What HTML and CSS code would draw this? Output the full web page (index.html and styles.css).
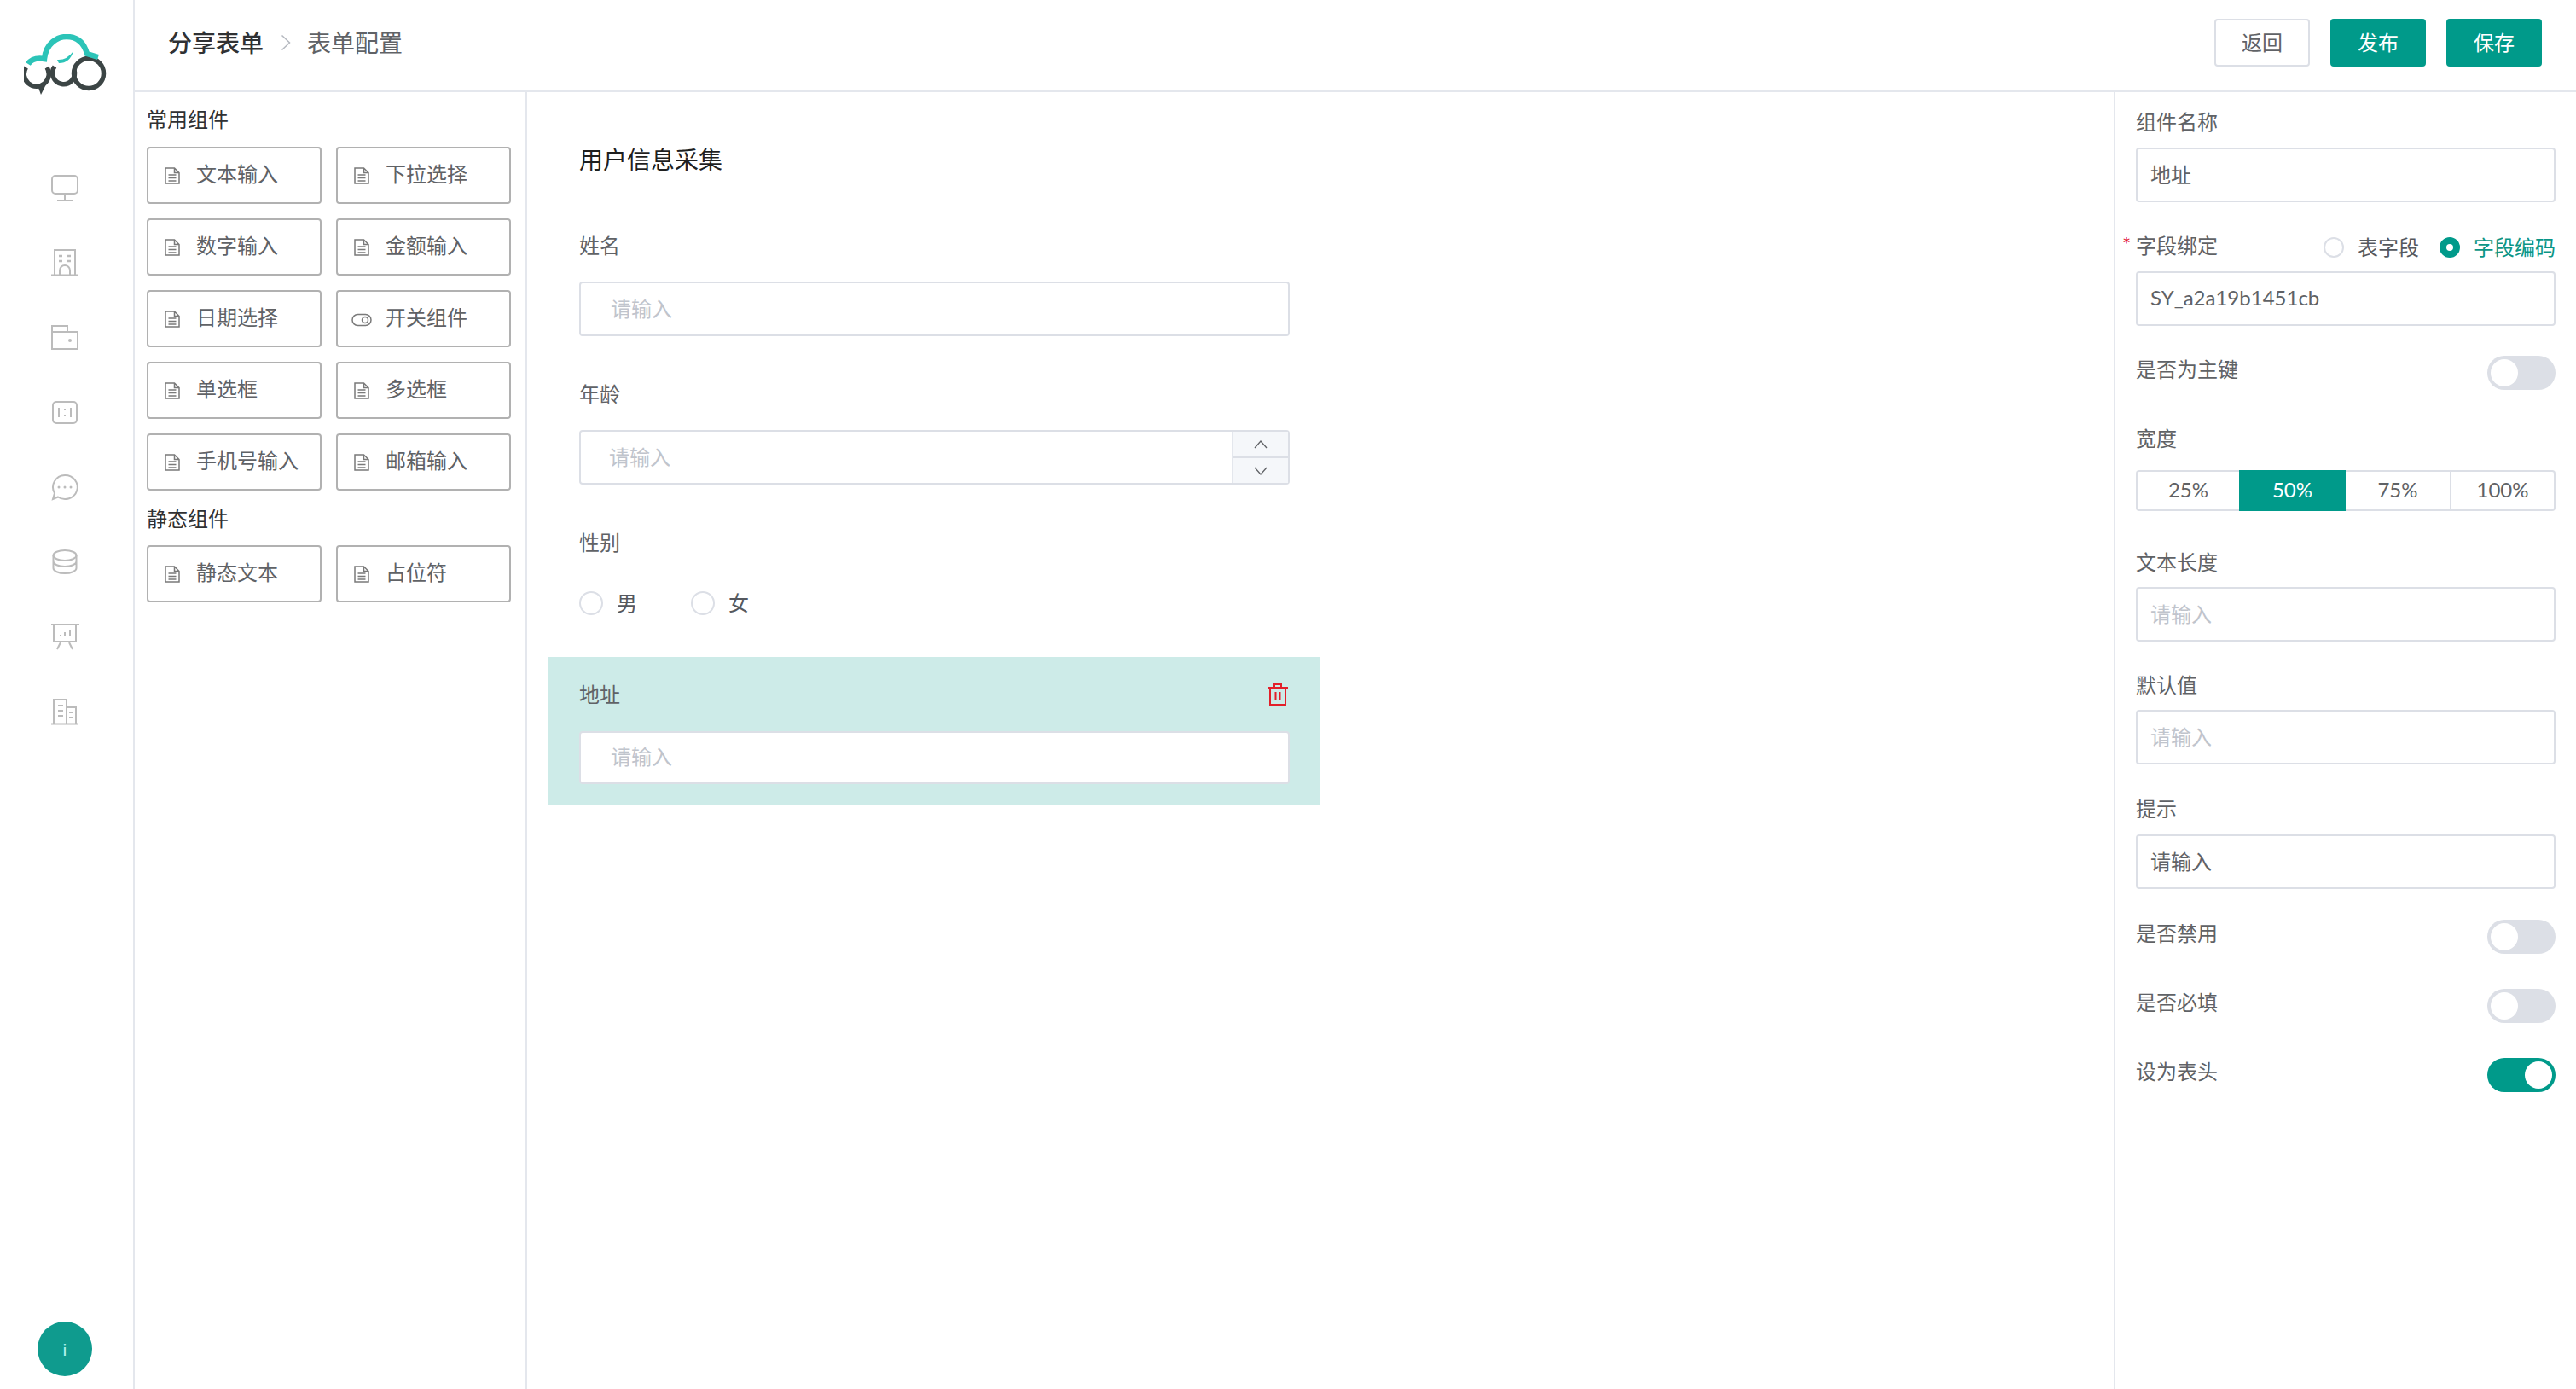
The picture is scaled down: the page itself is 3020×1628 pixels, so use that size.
FILE: index.html
```html
<!DOCTYPE html>
<html lang="zh-CN">
<head>
<meta charset="utf-8">
<title>表单配置</title>
<link rel="stylesheet" href="styles.css">
</head>
<body>
<svg class="defs" width="0" height="0" aria-hidden="true">
  <symbol id="doc" viewBox="0 0 18 20"><path d="M1 1h10.5L17 6.5V19H1z M11.500 1v5.500H17 M4.500 9h9 M4.500 12.500h9 M4.500 16h9" fill="none" stroke="currentColor" stroke-width="1.500"/></symbol>
  <symbol id="toggle" viewBox="0 0 24 16"><rect x="1" y="1.500" width="22" height="13" rx="6.500" fill="none" stroke="currentColor" stroke-width="1.500"/><circle cx="16" cy="8" r="3.500" fill="none" stroke="currentColor" stroke-width="1.500"/></symbol>
</svg>
<div class="app">
  <aside class="sidebar">
    <svg class="logo" width="98" height="72" viewBox="0 0 98 72">
      <g fill="none" stroke-width="5.500">
        <path stroke="#3c4545" d="M2.500 39A14.500 14.500 0 1 0 27 39"/>
        <path stroke="#3c4545" d="M36 38A13 13 0 1 0 59 42"/>
        <circle stroke="#3c4545" cx="76" cy="46" r="17.500"/>
        <path stroke="#2cc4b8" stroke-width="6.500" d="M5 35Q10 27 24 29C26 10 40 3 50 3C64 3 71 12 74 23L87 27"/>
      </g>
      <path fill="#3c4545" d="M16 60l10-1-6 12z"/>
      <path fill="#2cc4b8" d="M39 30Q50 31 58 20Q54 34 41 34z"/>
    </svg>
    <nav class="nav">
      <a class="nav-item"><svg class="nav-icon" viewBox="0 0 32 32"><rect x="1" y="1" width="30" height="21" rx="4"/><path d="M16 22v7M7 30h18"/></svg></a>
      <a class="nav-item"><svg class="nav-icon" viewBox="0 0 32 32"><path d="M4 30V1h24v29M0 30.500h32M10 30v-5a6 6 0 0 1 12 0v5"/><path class="thick" d="M9 8h4M19 8h4M9 14h4M19 14h4"/></svg></a>
      <a class="nav-item"><svg class="nav-icon" viewBox="0 0 32 32"><path d="M1 2h18v7H1zM1 9h30v20H1z"/><circle class="dot" cx="22" cy="19" r="2"/></svg></a>
      <a class="nav-item"><svg class="nav-icon" viewBox="0 0 32 32"><rect x="2" y="3" width="28" height="25" rx="4"/><path d="M9 10v11M23 10v11M16 11v2M16 18v2"/></svg></a>
      <a class="nav-item"><svg class="nav-icon" viewBox="0 0 32 32"><path d="M16 2a14.500 14 0 1 1-8 25.500L2 30l2-7A14.500 14 0 0 1 16 2z"/><circle class="dot" cx="9" cy="16" r="1.500"/><circle class="dot" cx="16" cy="16" r="1.500"/><circle class="dot" cx="23" cy="16" r="1.500"/></svg></a>
      <a class="nav-item"><svg class="nav-icon" viewBox="0 0 32 32"><ellipse cx="16" cy="8" rx="13.500" ry="6"/><path d="M2.500 8v7c0 3.300 6 6 13.500 6s13.500-2.700 13.500-6V8M2.500 15v8c0 3.300 6 6 13.500 6s13.500-2.700 13.500-6v-8"/></svg></a>
      <a class="nav-item"><svg class="nav-icon" viewBox="0 0 32 32"><path d="M0 2h33M3 2v20h26V2M11 23l-4 8M21 23l4 8M11 16v-2M16 16v-5M22 16V8"/></svg></a>
      <a class="nav-item"><svg class="nav-icon" viewBox="0 0 32 32"><path d="M0 30.500h32M3 30V2h15v28M18 11h11v19M8 9h6M8 15h6M8 21h6M21 17h5M21 23h5"/></svg></a>
    </nav>
    <div class="avatar">i</div>
  </aside>
  <div class="main">
    <header class="topbar">
      <div class="crumbs">
        <span class="crumb-strong">分享表单</span>
        <svg class="crumb-sep" viewBox="0 0 12 20"><path d="M1.500 1.500l9 8.500-9 8.500"/></svg>
        <span class="crumb">表单配置</span>
      </div>
      <div class="actions">
        <button class="btn">返回</button>
        <button class="btn btn-primary">发布</button>
        <button class="btn btn-primary">保存</button>
      </div>
    </header>
    <div class="workspace">
      <section class="palette">
        <h3 class="palette-title">常用组件</h3>
        <div class="palette-grid">
          <div class="chip"><svg class="chip-doc"><use href="#doc"/></svg><span>文本输入</span></div>
          <div class="chip"><svg class="chip-doc"><use href="#doc"/></svg><span>下拉选择</span></div>
          <div class="chip"><svg class="chip-doc"><use href="#doc"/></svg><span>数字输入</span></div>
          <div class="chip"><svg class="chip-doc"><use href="#doc"/></svg><span>金额输入</span></div>
          <div class="chip"><svg class="chip-doc"><use href="#doc"/></svg><span>日期选择</span></div>
          <div class="chip"><svg class="chip-toggle"><use href="#toggle"/></svg><span>开关组件</span></div>
          <div class="chip"><svg class="chip-doc"><use href="#doc"/></svg><span>单选框</span></div>
          <div class="chip"><svg class="chip-doc"><use href="#doc"/></svg><span>多选框</span></div>
          <div class="chip"><svg class="chip-doc"><use href="#doc"/></svg><span>手机号输入</span></div>
          <div class="chip"><svg class="chip-doc"><use href="#doc"/></svg><span>邮箱输入</span></div>
        </div>
        <h3 class="palette-title palette-title-second">静态组件</h3>
        <div class="palette-grid palette-grid-second">
          <div class="chip"><svg class="chip-doc"><use href="#doc"/></svg><span>静态文本</span></div>
          <div class="chip"><svg class="chip-doc"><use href="#doc"/></svg><span>占位符</span></div>
        </div>
      </section>
      <section class="canvas">
        <h2 class="form-title">用户信息采集</h2>
        <div class="label cf-name">姓名</div>
        <div class="input cf-input"><span class="ph">请输入</span></div>
        <div class="label cf-age">年龄</div>
        <div class="input number cf-input">
          <span class="ph number-ph">请输入</span>
          <div class="stepper">
            <div class="step"><svg viewBox="0 0 16 10"><path d="M1 9l7-8 7 8"/></svg></div>
            <div class="step step-down"><svg viewBox="0 0 16 10"><path d="M1 1l7 8 7-8"/></svg></div>
          </div>
        </div>
        <div class="label cf-gender">性别</div>
        <div class="radio-row">
          <label class="radio"><i class="radio-dot"></i><span>男</span></label>
          <label class="radio"><i class="radio-dot"></i><span>女</span></label>
        </div>
        <div class="selected-field">
          <div class="selected-head">
            <span class="label">地址</span>
            <svg class="trash" viewBox="0 0 24 26"><path d="M0 5h24M8 5V1h8v4M3 5v20h18V5M9.500 10v10M14.500 10v10"/></svg>
          </div>
          <div class="input selected-input"><span class="ph">请输入</span></div>
        </div>
      </section>
      <aside class="props">
        <div class="label p-first">组件名称</div>
        <div class="input p-input"><span class="val">地址</span></div>
        <div class="bind-row">
          <span class="label bind-label">字段绑定</span>
          <span class="bind-radios">
            <span class="mini-radio"><i class="radio-dot small"></i><span>表字段</span></span>
            <span class="mini-radio on"><i class="radio-dot small on"></i><span>字段编码</span></span>
          </span>
        </div>
        <div class="input p-input"><span class="val">SY_a2a19b1451cb</span></div>
        <div class="switch-row p-switch-first"><span class="label">是否为主键</span><i class="switch"></i></div>
        <div class="label p-width">宽度</div>
        <div class="segment">
          <span class="seg">25%</span>
          <span class="seg seg-on">50%</span>
          <span class="seg">75%</span>
          <span class="seg seg-last">100%</span>
        </div>
        <div class="label p-len">文本长度</div>
        <div class="input p-input-tight"><span class="ph">请输入</span></div>
        <div class="label p-next">默认值</div>
        <div class="input p-input-tight"><span class="ph">请输入</span></div>
        <div class="label p-tip">提示</div>
        <div class="input p-input"><span class="val">请输入</span></div>
        <div class="switch-row p-switch-second"><span class="label">是否禁用</span><i class="switch"></i></div>
        <div class="switch-row p-switch"><span class="label">是否必填</span><i class="switch"></i></div>
        <div class="switch-row p-switch"><span class="label">设为表头</span><i class="switch switch-on"></i></div>
      </aside>
    </div>
  </div>
</div>
</body>
</html>
```
FILE: styles.css
```css
* { box-sizing: border-box; }
html, body { margin: 0; padding: 0; }
body {
  font-family: Lato, "Noto Sans CJK SC", sans-serif;
  font-size: 24px;
  color: #606266;
  background: #fff;
}
.defs { position: absolute; }
.app { display: flex; width: 3020px; height: 1628px; overflow: hidden; }

/* sidebar */
.sidebar {
  width: 158px;
  flex: none;
  display: flex;
  flex-direction: column;
  align-items: center;
  padding: 40px 4px 0 0;
  border-right: 2px solid #e4e7ed;
}
.logo { display: block; flex: none; margin-left: 2px; }
.nav { margin-top: 65px; display: flex; flex-direction: column; }
.nav-item { height: 87.6px; display: flex; align-items: center; justify-content: center; }
.nav-icon { width: 32px; height: 32px; fill: none; stroke: #bcbcbc; stroke-width: 2; overflow: visible; }
.nav-icon .dot { fill: #bcbcbc; stroke: none; }
.nav-icon .thick { stroke-width: 2.500; }
.avatar {
  margin-top: auto;
  margin-bottom: 15px;
  width: 64px;
  height: 64px;
  border-radius: 50%;
  background: #0f9b8e;
  color: #b2f5ef;
  display: flex;
  align-items: center;
  justify-content: center;
  font-size: 20px;
}

/* top bar */
.main { flex: 1; display: flex; flex-direction: column; min-width: 0; }
.topbar {
  height: 108px;
  flex: none;
  border-bottom: 2px solid #e4e7ed;
  display: flex;
  align-items: center;
  justify-content: space-between;
  padding: 0 40px 6px 39px;
}
.crumbs { display: flex; align-items: center; font-size: 28px; line-height: 40px; }
.crumb-strong { font-weight: 500; color: #303133; }
.crumb-sep { width: 12px; height: 20px; margin: 0 19px 0 20px; fill: none; stroke: #b4b8bf; stroke-width: 1.500; }
.crumb { color: #606266; }
.actions { display: flex; gap: 24px; }
.btn {
  width: 112px;
  height: 56px;
  border: 2px solid #dcdfe6;
  border-radius: 4px;
  background: #fff;
  color: #606266;
  font: inherit;
  padding: 0 0 3px;
}
.btn-primary { background: #009a8a; border-color: #009a8a; color: #fff; }

/* layout */
.workspace { flex: 1; display: flex; min-height: 0; }

/* palette */
.palette {
  width: 460px;
  flex: none;
  padding: 16px 0 0 14px;
  border-right: 2px solid #e4e7ed;
}
.palette-title { margin: 0; font-size: 24px; line-height: 32px; font-weight: 400; color: #303133; }
.palette-title-second { margin-top: 17px; }
.palette-grid {
  margin-top: 16px;
  display: grid;
  grid-template-columns: 205px 205px;
  grid-auto-rows: 67px;
  gap: 17px;
}
.palette-grid-second { margin-top: 15px; }
.chip {
  position: relative;
  display: flex;
  align-items: center;
  padding-left: 56px;
  border: 2px solid #b1b1b1;
  border-radius: 4px;
  color: #606266;
  line-height: 32px;
}
.chip span { position: relative; top: -2px; }
.chip-doc { position: absolute; left: 19px; top: 22px; width: 18px; height: 20px; color: #7a7a7a; }
.chip-toggle { position: absolute; left: 16px; top: 25px; width: 24px; height: 16px; color: #7a7a7a; }

/* canvas */
.canvas { flex: 1; min-width: 0; padding: 59px 0 0 61px; }
.form-title { margin: 0; font-size: 28px; line-height: 40px; font-weight: 400; color: #1f1f1f; }
.label { line-height: 36px; color: #606266; }
.cf-name { margin-top: 63px; }
.cf-age { margin-top: 50px; }
.cf-gender { margin-top: 50px; }
.input {
  display: flex;
  align-items: center;
  height: 64px;
  padding-bottom: 3px;
  border: 2px solid #dcdfe6;
  border-radius: 4px;
  background: #fff;
}
.ph { color: #c0c4cc; }
.val { color: #606266; }
.cf-input { width: 833px; margin-top: 24px; padding-left: 35px; }
.number { position: relative; }
.number-ph { position: relative; left: -2px; }
.stepper {
  position: absolute;
  right: 0;
  top: 0;
  bottom: 0;
  width: 66px;
  border-left: 2px solid #e4e7ed;
  background: #f5f7fa;
  display: flex;
  flex-direction: column;
}
.step { flex: 1; display: flex; align-items: center; justify-content: center; }
.step-down { border-top: 2px solid #dcdfe6; }
.step svg { width: 16px; height: 10px; fill: none; stroke: #606266; stroke-width: 1.300; }
.radio-row { margin-top: 33px; height: 40px; display: flex; align-items: center; gap: 63px; }
.radio { display: flex; align-items: center; gap: 16px; line-height: 36px; }
.radio span { color: #55585e; }
.radio-dot {
  display: block;
  width: 28px;
  height: 28px;
  border: 2px solid #dcdfe6;
  border-radius: 50%;
  background: #fff;
}
.selected-field {
  margin: 43px 0 0 -37px;
  width: 906px;
  padding: 26px 36px 25px 37px;
  background: #cdebe8;
}
.selected-head { display: flex; align-items: center; justify-content: space-between; }
.trash { width: 24px; height: 26px; margin-right: 2px; fill: none; stroke: #e3202a; stroke-width: 2; }
.selected-input { height: 62px; margin-top: 25px; padding-left: 35px; padding-bottom: 5px; border-color: #dcdfe6; }

/* properties */
.props {
  width: 542px;
  flex: none;
  padding: 17px 24px 0 24px;
  border-left: 2px solid #e4e7ed;
}
.p-input { margin-top: 12px; padding-left: 15px; }
.p-input-tight { margin-top: 11px; padding-left: 15px; }
.bind-row { margin-top: 33px; display: flex; justify-content: space-between; align-items: center; height: 36px; }
.bind-label { position: relative; }
.bind-label::before {
  content: "*";
  position: absolute;
  left: -16px;
  top: -2px;
  color: #e3202a;
  font-size: 24px;
}
.bind-radios { display: flex; gap: 24px; align-items: center; }
.mini-radio { display: flex; align-items: center; gap: 16px; color: #55585e; }
.mini-radio.on { color: #0b9585; }
.radio-dot.small { width: 24px; height: 24px; margin-top: 3px; }
.radio-dot.small.on { border: 8px solid #009a8a; background: #fff; }
.switch-row { display: flex; justify-content: space-between; align-items: flex-start; height: 40px; }
.switch-row .label { line-height: 32px; }
.p-switch-first { margin-top: 35px; }
.p-switch-second { margin-top: 36px; }
.p-switch { margin-top: 41px; }
.switch {
  position: relative;
  display: block;
  width: 80px;
  height: 40px;
  border-radius: 20px;
  background: #dcdfe6;
}
.switch::after {
  content: "";
  position: absolute;
  left: 4px;
  top: 4px;
  width: 32px;
  height: 32px;
  border-radius: 50%;
  background: #fff;
}
.switch-on { background: #009a8a; }
.switch-on::after { left: 44px; }
.p-width { margin-top: 39px; }
.segment {
  margin-top: 19px;
  display: grid;
  grid-template-columns: 121px 125px 122px 124px;
  height: 48px;
  border-radius: 4px;
}
.seg {
  display: flex;
  align-items: center;
  justify-content: center;
  padding-bottom: 3px;
  border: 2px solid #dcdfe6;
  border-left-width: 0;
  border-right-width: 0;
  color: #606266;
}
.seg:first-child { border-left-width: 2px; border-radius: 4px 0 0 4px; }
.seg-on { background: #009a8a; border-color: #009a8a; color: #fff; }
.seg-last { border-left-width: 2px; border-right-width: 2px; border-radius: 0 4px 4px 0; }
.p-len { margin-top: 42px; }
.p-next { margin-top: 33px; }
.p-tip { margin-top: 34px; }
```
